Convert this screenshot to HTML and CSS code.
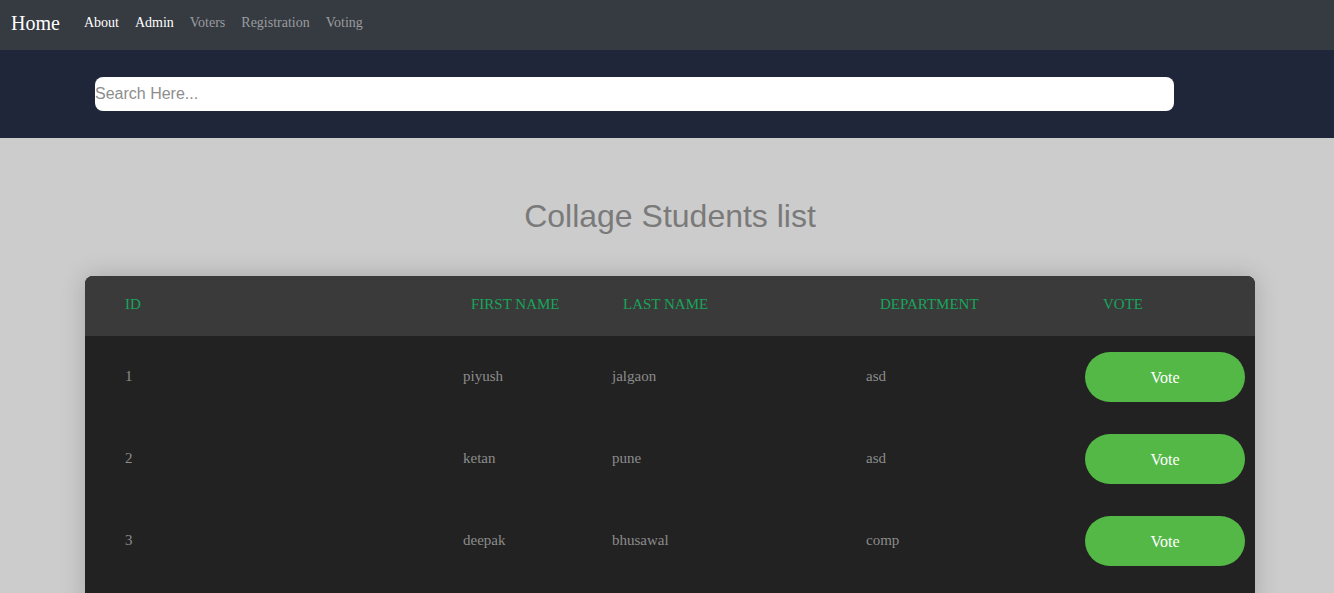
FILE: index.html
```html
<!DOCTYPE html>
<html>
<head>
<meta charset="utf-8">
<title>Collage Students list</title>
<link rel="stylesheet" href="styles.css">
</head>
<body>
<nav class="navbar">
  <a class="brand" href="#">Home</a>
  <ul class="nav-links">
    <li><a class="active" href="#">About</a></li>
    <li><a class="active" href="#">Admin</a></li>
    <li><a href="#">Voters</a></li>
    <li><a href="#">Registration</a></li>
    <li><a href="#">Voting</a></li>
  </ul>
</nav>
<div class="search-band">
  <input class="search" type="text" placeholder="Search Here...">
</div>
<main class="content">
  <h1 class="title">Collage Students list</h1>
  <div class="table">
    <div class="thead">
      <div class="th first">ID</div>
      <div class="th">FIRST NAME</div>
      <div class="th">LAST NAME</div>
      <div class="th">DEPARTMENT</div>
      <div class="th">VOTE</div>
    </div>
    <div class="row">
      <div class="td first">1</div>
      <div class="td">piyush</div>
      <div class="td">jalgaon</div>
      <div class="td">asd</div>
      <div class="td-btn"><button class="vote">Vote</button></div>
    </div>
    <div class="row">
      <div class="td first">2</div>
      <div class="td">ketan</div>
      <div class="td">pune</div>
      <div class="td">asd</div>
      <div class="td-btn"><button class="vote">Vote</button></div>
    </div>
    <div class="row">
      <div class="td first">3</div>
      <div class="td">deepak</div>
      <div class="td">bhusawal</div>
      <div class="td">comp</div>
      <div class="td-btn"><button class="vote">Vote</button></div>
    </div>
  </div>
</main>
</body>
</html>
```

FILE: styles.css
```css
* { box-sizing: border-box; }
html, body { margin: 0; padding: 0; }
body {
  background: #cccccc;
  font-family: "Liberation Serif", "Times New Roman", serif;
  overflow: hidden;
  height: 593px;
}
.navbar {
  height: 50px;
  background: #363a41;
  display: flex;
  align-items: center;
  padding: 0 11px 6px;
}
.brand {
  color: #ffffff;
  text-decoration: none;
  font-size: 20px;
  margin-right: 24px;
  position: relative;
  top: 1px;
}
.nav-links {
  list-style: none;
  margin: 0;
  padding: 0;
  display: flex;
  gap: 16px;
}
.nav-links a {
  color: #9a9c9f;
  text-decoration: none;
  font-size: 14px;
}
.nav-links a.active {
  color: #ffffff;
}
.search-band {
  height: 88px;
  background: #20263a;
  display: flex;
  align-items: center;
  padding-left: 95px;
  padding-bottom: 1px;
}
.search {
  width: 1079px;
  height: 34px;
  border: none;
  border-radius: 8px;
  background: #ffffff;
  padding: 0;
  font-family: "Liberation Sans", Arial, sans-serif;
  font-size: 16px;
  outline: none;
}
.search::placeholder { color: #8d8d8d; }
.content {
  padding: 0 85px 0 85px;
}
.title {
  margin: 0 -85px;
  padding-top: 58px;
  padding-left: 6px;
  height: 138px;
  text-align: center;
  font-family: "Liberation Sans", Arial, sans-serif;
  font-weight: normal;
  font-size: 32px;
  color: #7a7a7a;
  line-height: 40px;
}
.table {
  width: 1170px;
  border-radius: 8px;
  overflow: hidden;
  background: #222222;
  padding-bottom: 30px;
  box-shadow: 0 0 25px rgba(0, 0, 0, 0.18);
}
.thead {
  height: 60px;
  background: #3a3a3a;
  display: grid;
  grid-template-columns: 386px 152px 257px 223px 1fr;
  align-items: center;
  padding-bottom: 3px;
}
.th {
  color: #17a55b;
  font-size: 15px;
}
.first { padding-left: 40px; }
.row {
  height: 82px;
  display: grid;
  grid-template-columns: 378px 149px 254px 219px 1fr;
  align-items: center;
}
.td {
  color: #8c8c8c;
  font-size: 15px;
  padding-bottom: 2px;
}
.td-btn {
  display: flex;
  align-items: center;
}
.vote {
  width: 160px;
  height: 50px;
  border: none;
  border-radius: 25px;
  background: #54b847;
  color: #ffffff;
  font-family: "Liberation Serif", "Times New Roman", serif;
  font-size: 16px;
  padding-top: 2px;
  cursor: pointer;
}
```
